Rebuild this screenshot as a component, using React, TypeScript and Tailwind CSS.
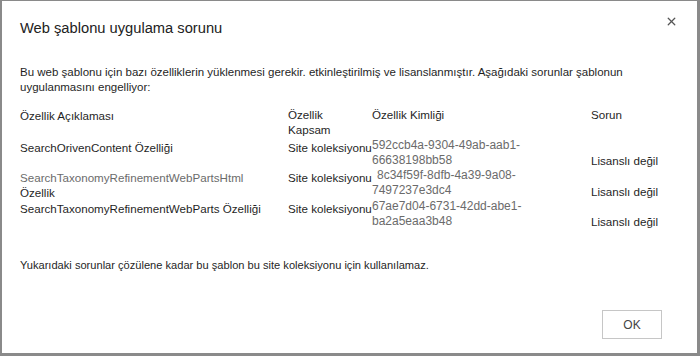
import { X } from 'lucide-react';

const rows = [
  {
    name: [{ text: 'SearchOrivenContent Özelliği', muted: false }],
    scope: 'Site koleksiyonu',
    id: ['592ccb4a-9304-49ab-aab1-', '66638198bb58'],
    indent: false,
    issue: 'Lisanslı değil',
  },
  {
    name: [
      { text: 'SearchTaxonomyRefinementWebPartsHtml', muted: true },
      { text: 'Özellik', muted: false },
    ],
    scope: 'Site koleksiyonu',
    id: ['8c34f59f-8dfb-4a39-9a08-', '7497237e3dc4'],
    indent: true,
    issue: 'Lisanslı değil',
  },
  {
    name: [{ text: 'SearchTaxonomyRefinementWebParts Özelliği', muted: false }],
    scope: 'Site koleksiyonu',
    id: ['67ae7d04-6731-42dd-abe1-', 'ba2a5eaa3b48'],
    indent: false,
    issue: 'Lisanslı değil',
  },
];

export default function App() {
  return (
    <div
      className="relative w-[700px] h-[356px] bg-white border-t border-l-2 border-r-[3px] border-b-[3px] border-[#8a8a8a] text-[#1f1f1f] flex flex-col"
      style={{ fontFamily: '"Liberation Sans", Arial, sans-serif' }}
    >
      <button className="absolute right-[17px] top-[12px] text-[#555] p-0.5">
        <X className="w-[13px] h-[13px]" strokeWidth={2.4} />
      </button>

      <h1 className="ml-[18px] mt-[16px] text-[14.7px] leading-[22px] text-[#222]">
        Web şablonu uygulama sorunu
      </h1>

      <p className="ml-[18px] mt-[26px] w-[620px] text-[11.5px] leading-[15px]">
        Bu web şablonu için bazı özelliklerin yüklenmesi gerekir. etkinleştirilmiş ve lisanslanmıştır. Aşağıdaki sorunlar şablonun uygulanmasını engelliyor:
      </p>

      <div className="ml-[18px] mt-[12px] grid grid-cols-[268px_84px_219px_1fr] text-[11.6px] leading-[15px]">
        <div className="pt-[1px] h-[32px]">Özellik Açıklaması</div>
        <div>
          <div>Özellik</div>
          <div>Kapsam</div>
        </div>
        <div>Özellik Kimliği</div>
        <div>Sorun</div>

        {rows.map((row, i) => (
          <div key={i} className="contents">
            <div className={i === 1 ? 'pt-[1px] h-[31px]' : 'pt-[1px] h-[30px]'}>
              {row.name.map((n) => (
                <div key={n.text} className={n.muted ? 'text-[#6b6b6b]' : ''}>
                  {n.text}
                </div>
              ))}
            </div>
            <div className="pt-[1px] whitespace-nowrap">{row.scope}</div>
            <div className="text-[#6b6b6b] text-[12px] -mt-[1px]">
              <div className={row.indent ? 'pl-[5px]' : ''}>{row.id[0]}</div>
              <div>{row.id[1]}</div>
            </div>
            <div className="flex flex-col justify-end pb-[1px]">{row.issue}</div>
          </div>
        ))}
      </div>

      <p className="ml-[18px] mt-[28px] text-[11.1px] leading-[15px]">
        Yukarıdaki sorunlar çözülene kadar bu şablon bu site koleksiyonu için kullanılamaz.
      </p>

      <div className="mt-auto mb-[14px] mr-[35px] flex justify-end">
        <button className="w-[60px] h-[29px] border border-[#c6c6c6] bg-white text-[12px] text-[#444]">
          OK
        </button>
      </div>
    </div>
  );
}
